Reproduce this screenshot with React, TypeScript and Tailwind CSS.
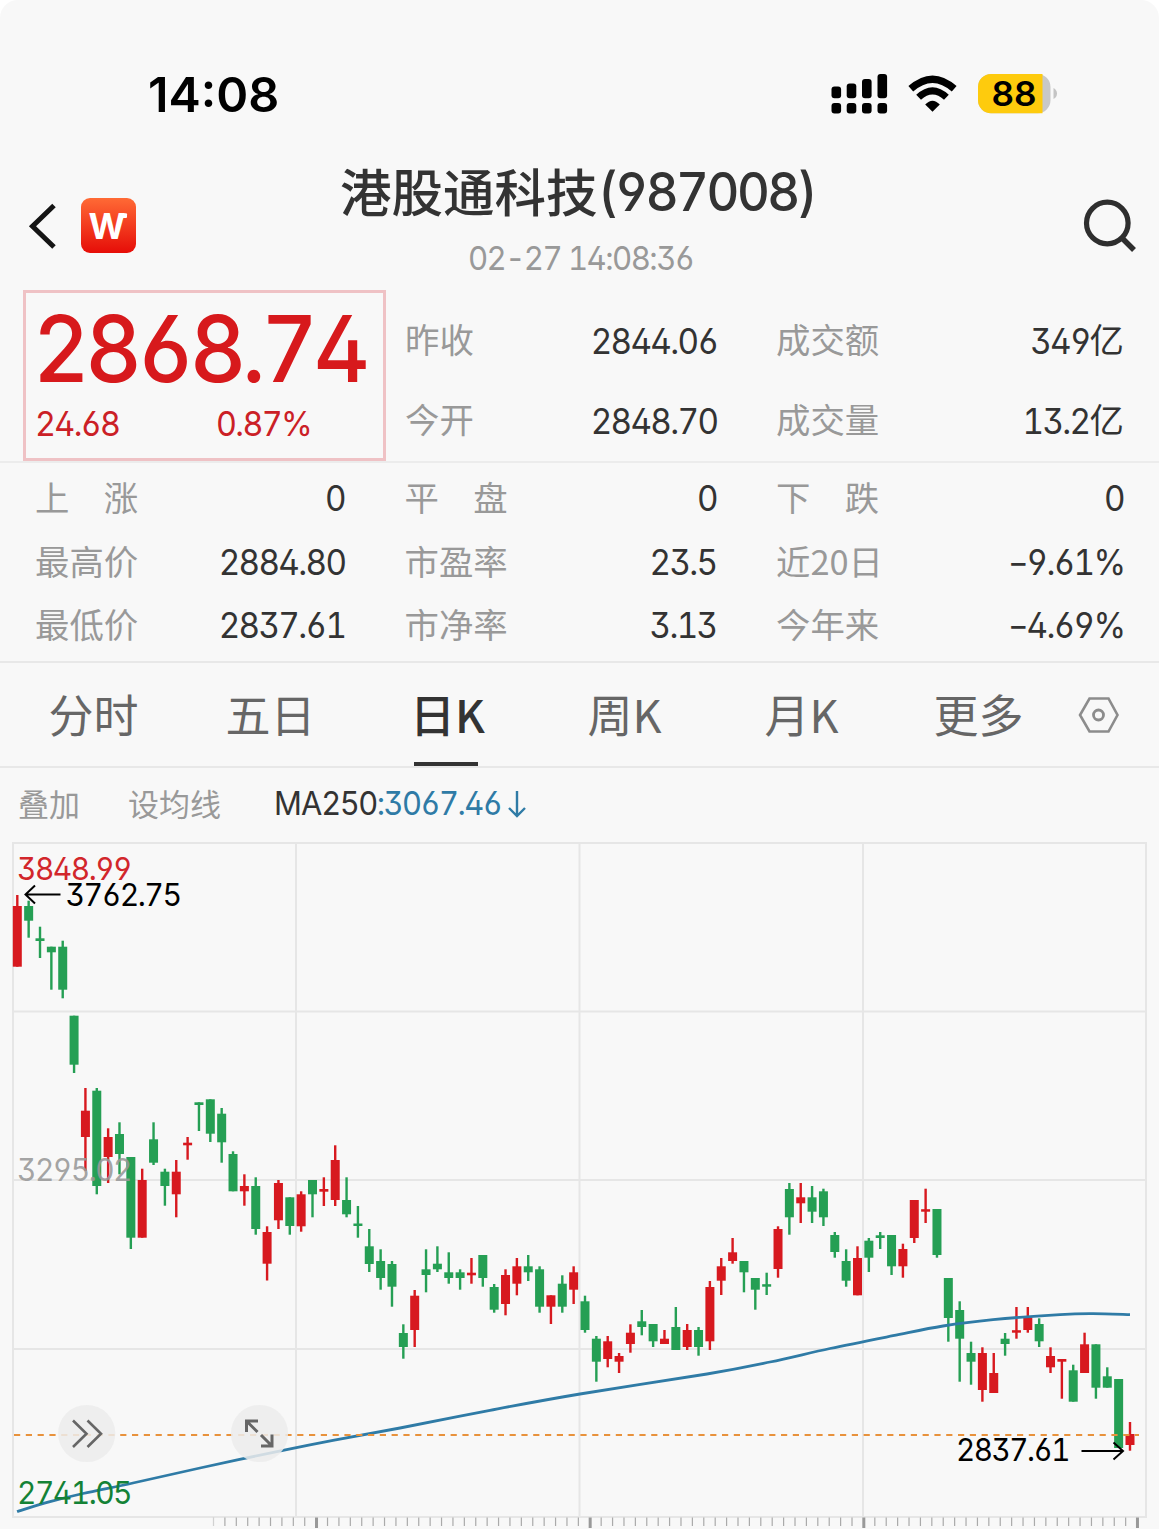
import React from "react";

const RED = "#d7191f";
const GREEN = "#259f54";

// [rising, high, body top, body bottom, low] in chart canvas units
const CANDLES: [number, number, number, number, number][] = [
  [1, 895, 906, 966.7, 966.7], [0, 900.7, 906, 920.7, 937.7], [0, 926.7, 938.3, 941, 958], [0, 946.7, 946.7, 952.3, 989.7],
  [0, 940.7, 946.7, 989.7, 998.3], [0, 1015.7, 1015.7, 1064.7, 1073], [1, 1088, 1110.7, 1137, 1171], [0, 1088, 1090.7, 1186, 1194.3],
  [1, 1128.3, 1137, 1157, 1183], [0, 1122.3, 1134, 1154, 1174.3], [0, 1157, 1157, 1237.7, 1249], [1, 1168.7, 1180, 1237.7, 1237.7],
  [0, 1122.3, 1139.3, 1162.7, 1165], [0, 1168.7, 1171.7, 1186, 1205.7], [1, 1160, 1171.7, 1194.3, 1217.3], [1, 1137, 1142.7, 1145.3, 1159.7],
  [0, 1102.3, 1102.3, 1105, 1131], [0, 1099.3, 1099.3, 1133.7, 1142], [0, 1108, 1113.7, 1142.3, 1162.7], [0, 1151.3, 1154, 1191.3, 1191.3],
  [1, 1174.3, 1186, 1191.3, 1205.7], [0, 1177.3, 1186, 1229, 1234.7], [1, 1226.3, 1232, 1263.7, 1280.5], [1, 1180, 1183, 1220.3, 1229],
  [0, 1197.3, 1197.3, 1226, 1234.7], [1, 1191.3, 1194.3, 1226.3, 1231.7], [0, 1180, 1180, 1194.3, 1217.3], [1, 1177.3, 1189, 1191.7, 1206],
  [1, 1145.3, 1160, 1200, 1206], [0, 1177.3, 1200, 1214.3, 1217.3], [0, 1206, 1223.5, 1226, 1237.7], [0, 1229, 1246.3, 1264, 1272],
  [0, 1249.3, 1261, 1278, 1289.7], [0, 1261, 1264, 1286.7, 1306.7], [0, 1324.3, 1333, 1347, 1358.7], [1, 1290, 1295.7, 1330, 1347],
  [0, 1249.3, 1269.3, 1275, 1292.3], [0, 1246.3, 1263.7, 1269.3, 1272], [0, 1252.3, 1272.3, 1278, 1283.7], [0, 1269.3, 1272.3, 1278, 1289.7],
  [1, 1258, 1272.7, 1275.3, 1283.7], [0, 1255, 1255, 1278, 1286.7], [0, 1284, 1287, 1309.7, 1312.7], [1, 1269.3, 1275, 1304, 1315.3],
  [1, 1258, 1266.3, 1283.7, 1295.3], [0, 1255, 1266.3, 1272.3, 1281], [0, 1266.3, 1269.3, 1306.7, 1312.7], [1, 1295.3, 1295.3, 1306.7, 1324],
  [0, 1275.3, 1283.7, 1306.7, 1312.7], [1, 1266.3, 1272.3, 1289.7, 1304], [0, 1295.7, 1301.3, 1330, 1332.7], [0, 1336, 1338.7, 1361.7, 1381.7],
  [1, 1336, 1341.3, 1359, 1367.3], [1, 1353, 1356, 1361.7, 1373], [1, 1324.3, 1332.7, 1344, 1352.7], [0, 1310, 1321.3, 1327, 1335.3],
  [0, 1324, 1324, 1341.3, 1347], [1, 1330, 1338.7, 1344, 1344], [0, 1307, 1327, 1350, 1350], [1, 1324, 1330, 1347, 1350],
  [0, 1327, 1330, 1347, 1355.7], [1, 1281, 1287, 1341.3, 1350], [1, 1258, 1266.3, 1280.7, 1295], [1, 1238, 1252.3, 1261, 1263.7],
  [0, 1261, 1261, 1272.3, 1292.3], [0, 1278, 1278, 1289.7, 1309.7], [0, 1272.7, 1284.2, 1286.7, 1295], [1, 1226.3, 1229, 1269, 1277.7],
  [0, 1183, 1189, 1217.3, 1234.7], [1, 1183, 1197.3, 1203.3, 1223], [0, 1186, 1197.3, 1211.7, 1223], [0, 1188.7, 1191.3, 1217.3, 1226],
  [0, 1232, 1235, 1252, 1257.7], [0, 1249.3, 1261, 1280.7, 1286.7], [1, 1246.3, 1258, 1295.3, 1295.3], [0, 1238, 1240.7, 1257.7, 1272],
  [0, 1232, 1235.3, 1238, 1249], [0, 1235, 1235, 1266.3, 1275], [1, 1243.7, 1249, 1266.3, 1277.7], [1, 1200, 1200, 1238, 1243],
  [1, 1188.7, 1209.2, 1211.7, 1223], [0, 1209, 1209, 1255, 1257.7], [0, 1278, 1278, 1318, 1341.7], [0, 1301.3, 1310, 1338.7, 1381.7],
  [0, 1341.7, 1353, 1361.7, 1384.7], [1, 1347.3, 1353, 1390, 1401.7], [1, 1353, 1373, 1393, 1393], [0, 1333, 1338.7, 1344, 1355.7],
  [1, 1307, 1330.2, 1332.7, 1338.7], [1, 1307, 1317.3, 1330, 1332.7], [0, 1318.3, 1324, 1341.3, 1347], [1, 1347.3, 1356, 1367.3, 1373],
  [1, 1359, 1359, 1361.7, 1398.7], [0, 1364.7, 1370.3, 1401.7, 1401.7], [1, 1332.7, 1344.3, 1373, 1373], [0, 1344.3, 1344.3, 1387.7, 1398.7],
  [0, 1367.3, 1376.3, 1387.7, 1387.7], [0, 1379, 1379, 1448, 1448], [1, 1422, 1434, 1445, 1450.7],
];

const MA_POINTS: [number, number][] = [
  [17, 1511.5], [50, 1501.7], [83, 1493.5], [133, 1483], [200, 1468], [283, 1450.3], [333, 1440.3], [400, 1428],
  [490, 1410.3], [580, 1394], [707, 1374], [770, 1362], [830, 1348.5], [893, 1335.7], [943, 1326],
  [993, 1319.7], [1060, 1314.6], [1093, 1313.7], [1130, 1314.7],
];

// Smooth curve through the moving-average points
function curve(p: [number, number][]) {
  let d = `M${p[0][0]} ${p[0][1]}`;
  for (let i = 0; i < p.length - 1; i++) {
    const a = p[Math.max(i - 1, 0)], b = p[i], c = p[i + 1], e = p[Math.min(i + 2, p.length - 1)];
    d += ` C${b[0] + (c[0] - a[0]) / 6} ${b[1] + (c[1] - a[1]) / 6} ${c[0] - (e[0] - b[0]) / 6} ${c[1] - (e[1] - b[1]) / 6} ${c[0]} ${c[1]}`;
  }
  return d;
}

const NUM = "inline-block whitespace-nowrap font-['Inter'] tracking-[-0.05em] scale-x-[0.95] [font-feature-settings:'tnum','ss01','cv02','cv03','cv04']";

function Stat({ label, value, unit }: { label: string; value: string; unit?: string }) {
  const negative = value.startsWith("-");
  return (
    <div className="flex items-center justify-between">
      <span className="pb-[5px] text-[34.4px] leading-none text-[#999]">{label}</span>
      <span className="flex items-center text-[#333]">
        <span className={`${NUM} origin-right text-[35px] leading-none`}>
          {negative && <span className="inline-block origin-right scale-x-[1.35] pr-[0px] pl-[0px] [font-feature-settings:'tnum'_0]">-</span>}
          {negative ? value.slice(1) : value}
        </span>
        {unit && <span className="pb-[5px] text-[34.4px] leading-none">{unit}</span>}
      </span>
    </div>
  );
}

function StatusBar() {
  return (
    <div className="flex h-[145px] items-start justify-between pt-[70px] pr-[102px] pl-[148px]">
      <span className="inline-block origin-left font-['Inter'] text-[48.500px] leading-[50px] font-semibold text-black">14:08</span>
      <svg width="230" height="48" viewBox="828 70 230 48">
        <g fill="#000">
          <rect x="831.5" y="86.5" width="9.6" height="11.7" rx="3" />
          <rect x="846.7" y="83.5" width="9.6" height="14.7" rx="3" />
          <rect x="862" y="79" width="9.6" height="19.2" rx="3" />
          <rect x="877.5" y="74" width="9.6" height="24.2" rx="3" />
          <rect x="831.5" y="103" width="9.6" height="10.6" rx="3" />
          <rect x="846.7" y="103" width="9.6" height="10.6" rx="3" />
          <rect x="862" y="103" width="9.6" height="10.6" rx="3" />
          <rect x="877.5" y="103" width="9.6" height="10.6" rx="3" />
          <path d="M932.5 111.8 L925.2 104.6 Q932.5 97 939.8 104.6Z" />
        </g>
        <path d="M910.800 88.800 Q932.500 69.500 954.200 88.800" fill="none" stroke="#000" strokeWidth="7.200" />
        <path d="M918.600 97.300 Q932.500 84.300 946.400 97.300" fill="none" stroke="#000" strokeWidth="7" />
        <path d="M991 74 H1037.500 A13 13 0 0 1 1050.500 87 V100.300 A13 13 0 0 1 1037.500 113.300 H991 A13 13 0 0 1 978 100.300 V87 A13 13 0 0 1 991 74Z" fill="#c8c8c8" />
        <path d="M991 74 H1042.500 V113.300 H991 A13 13 0 0 1 978 100.300 V87 A13 13 0 0 1 991 74Z" fill="#fecb0d" />
        <path d="M1053.500 88 Q1057 90 1057 93.500 T1053.500 99Z" fill="#c4c4c4" />
        <text x="991.500" y="106" fontFamily="Inter" fontWeight="600" fontSize="34" textLength="45" lengthAdjust="spacingAndGlyphs">88</text>
      </svg>
    </div>
  );
}

function Header() {
  return (
    <div className="flex h-[145px] justify-between pr-[22px] pl-[28px]">
      <div className="flex w-[200px] items-start gap-[24px] pt-[53px]">
        <svg className="mt-[4px]" width="29" height="48" viewBox="28 202 29 48">
          <path d="M54 205.500 L32.500 226.200 L54 247" fill="none" stroke="#151515" strokeWidth="5" />
        </svg>
        <svg width="55" height="55" viewBox="0 0 55 55">
          <defs>
            <linearGradient id="brand" x1="0" y1="0" x2="0" y2="1">
              <stop offset="0" stopColor="#ff6a35" />
              <stop offset="1" stopColor="#e60d08" />
            </linearGradient>
          </defs>
          <rect width="55" height="55" rx="9" fill="url(#brand)" />
          <text x="7.500" y="40.700" fill="#fff" fontFamily="Inter" fontWeight="700" fontSize="35" textLength="37" lengthAdjust="spacingAndGlyphs">W</text>
          <rect x="38.500" y="15.300" width="7.500" height="4.800" rx="1" fill="#fff" />
        </svg>
      </div>
      <div className="flex flex-col items-center pt-[17px]">
        <div className="flex h-[56px] w-[482px] items-center text-[51.500px] leading-none font-medium text-[#333]">
          <span className="whitespace-nowrap">港股通科技</span>
          <span className={`${NUM} origin-left pt-[4px] text-[53.500px]`}>(987008)</span>
        </div>
        <span className={`${NUM} mt-[23px] text-[32.800px] leading-[34px] text-[#999]`}>02-27 14:08:36</span>
      </div>
      <div className="flex w-[204px] justify-end pt-[54px]">
        <svg width="56" height="56" viewBox="1082 199 56 56">
          <circle cx="1107.300" cy="223" r="20.800" fill="none" stroke="#2e2e2e" strokeWidth="5.200" />
          <path d="M1121.500 237.500 L1134 250" stroke="#2e2e2e" strokeWidth="5.500" />
        </svg>
      </div>
    </div>
  );
}

function Quote() {
  return (
    <div className="flex h-[173px] border-b-2 border-[#ececec] pl-[23px]">
      <div className="h-[171px] w-[363px] border-[3px] border-[#efc2c5] pl-[7px]">
        <div className={`${NUM} mt-[8px] origin-left text-[92px] leading-[96px] font-medium text-[#d7191c]`}>2868.74</div>
        <div className="mt-[5px] flex pl-[2px] text-[34px] leading-[44px] text-[#cb2026]">
          <span className={`${NUM} w-[181px] origin-left`}>24.68</span>
          <span className={`${NUM} origin-left`}>0.87%</span>
        </div>
      </div>
      <div className="grid flex-1 grid-cols-[312px_348px] grid-rows-[80px_80px] gap-x-[59px] pt-[11px] pl-[19px]">
        <Stat label="昨收" value="2844.06" />
        <Stat label="成交额" value="349" unit="亿" />
        <Stat label="今开" value="2848.70" />
        <Stat label="成交量" value="13.2" unit="亿" />
      </div>
    </div>
  );
}

function Stats() {
  return (
    <div className="grid h-[200px] grid-cols-[310px_312px_348px] grid-rows-[63.500px_63.500px_63.500px] gap-x-[59.500px] border-b-2 border-[#e8e8e8] pt-[4px] pl-[35px]">
      <Stat label="上　涨" value="0" />
      <Stat label="平　盘" value="0" />
      <Stat label="下　跌" value="0" />
      <Stat label="最高价" value="2884.80" />
      <Stat label="市盈率" value="23.5" />
      <Stat label="近20日" value="-9.61%" />
      <Stat label="最低价" value="2837.61" />
      <Stat label="市净率" value="3.13" />
      <Stat label="今年来" value="-4.69%" />
    </div>
  );
}

function Tabs() {
  return (
    <div className="flex h-[105px] items-stretch border-b-2 border-[#e8e8e8] pl-[5px]">
      {["分时", "五日", "日K", "周K", "月K", "更多"].map((t) => (
        <div key={t} className={`relative flex w-[177px] justify-center pt-[28px] text-[45px] leading-[45px] ${t === "日K" ? "font-medium text-[#333]" : "text-[#666]"}`}>
          {t}
          {t === "日K" && <span className="absolute bottom-0 left-[55px] h-[4px] w-[64px] bg-[#333]" />}
        </div>
      ))}
      <svg className="mt-[30px] ml-[10px]" width="44" height="44" viewBox="0 0 44 44" fill="none" stroke="#8c8c8c">
        <path d="M12.500 5.500 H31.500 L40.500 22 L31.500 38.500 H12.500 L3 22Z" strokeWidth="2.600" />
        <circle cx="21.500" cy="22" r="5" strokeWidth="2.800" />
      </svg>
    </div>
  );
}

function Averages() {
  return (
    <div className="flex h-[74px] items-center pl-[18px] text-[31px] leading-none text-[#999]">
      <span className="w-[110px] pb-[6px]">叠加</span>
      <span className="w-[146px] pb-[6px]">设均线</span>
      <span className={`${NUM} w-[233px] origin-left pb-[1px] text-[32.500px] text-[#333]`}>
        <span className="tracking-[-0.03em]">MA</span>250<span className="text-[#2f7ba6]">:3067.46</span>
      </span>
      <svg className="mb-[3px]" width="20" height="30" viewBox="0 0 20 30" fill="none" stroke="#2f7ba6" strokeWidth="2.400">
        <path d="M10 2 V27 M2 19 L10 27 L18 19" />
      </svg>
    </div>
  );
}

function ChartText({ x, y, w, fill, children }: { x: number; y: number; w: number; fill: string; children: string }) {
  return (
    <text x={x} y={y} fill={fill} fontSize="31.500" textLength={w} lengthAdjust="spacingAndGlyphs" className="font-['Inter'] tracking-[-0.05em] [font-feature-settings:'tnum','ss01','cv02','cv03','cv04']">
      {children}
    </text>
  );
}

function Chart() {
  const ticks = Array.from({ length: 82 }, (_, i) => 212.900 + i * 11.402);
  return (
    <svg className="block" width="1160" height="687" viewBox="0 842 1160 687">
      <g stroke="#e6e6e6" strokeWidth="2" fill="none">
        <rect x="13" y="843" width="1133" height="674" />
        <path d="M296 843 V1517 M579.500 843 V1517 M863 843 V1517 M13 1011.500 H1146 M13 1180 H1146 M13 1349 H1146" />
      </g>
      {ticks.map((x, i) => {
        const major = i % 24 === 9;
        return <rect key={i} x={major ? x - 0.500 : x} y="1517.500" width={major ? 3 : 1.200} height={major ? 10.500 : 8.500} fill={major ? "#999" : "#aaa"} opacity={i === 0 ? 0.5 : 1} />;
      })}
      {CANDLES.map(([up, high, top, bottom, low], i) => {
        const x = 17.300 + i * 11.354;
        return (
          <g key={i} fill={up ? RED : GREEN}>
            <rect x={x - 1.200} y={high} width="2.400" height={low - high} />
            <rect x={x - 4.500} y={top} width="9" height={bottom - top} />
          </g>
        );
      })}
      <path d={curve(MA_POINTS)} fill="none" stroke="#2f7ba6" strokeWidth="2.800" />
      <path d="M14 1435 H1139" stroke="#e8923c" strokeWidth="2" strokeDasharray="6.200 5.600" />
      <g fill="#ececec" fillOpacity="0.850">
        <circle cx="86.700" cy="1433.500" r="28.600" />
        <circle cx="259.500" cy="1433.500" r="28.600" />
      </g>
      <g fill="none" stroke="#666" strokeWidth="2.600">
        <path d="M73 1420.500 L86.500 1433.800 L73 1447 M87.500 1420.500 L101 1433.800 L87.500 1447" />
        <path d="M258 1421 H246.500 V1432 M246.500 1421 L257.500 1432 M261 1446 H272 V1434.500 M261 1435 L272 1446" strokeWidth="3" />
      </g>
      <ChartText x={17} y={880} w={114} fill="#d2262b">3848.99</ChartText>
      <ChartText x={65.500} y={906} w={115} fill="#000">3762.75</ChartText>
      <ChartText x={17} y={1180.700} w={114} fill="#999999e0">3295.02</ChartText>
      <ChartText x={17} y={1503.700} w={114} fill="#148236">2741.05</ChartText>
      <ChartText x={956} y={1460.500} w={113} fill="#000">2837.61</ChartText>
      <g fill="none" stroke="#000" strokeWidth="2">
        <path d="M60.500 894.500 H25.500 M35 885.500 L25.500 894.500 L35 903.500" />
        <path d="M1081.500 1451 H1123 M1113.500 1442.500 L1123 1451 L1113.500 1459.500" />
      </g>
    </svg>
  );
}

export default function App() {
  return (
    <div className="h-[1529px] w-[1160px] overflow-hidden bg-white">
      <div className="h-[1529px] w-[1159px] overflow-hidden rounded-t-[18px] bg-[#f8f8f8] font-['Noto_Sans_CJK_SC',sans-serif]">
        <div className="w-[1160px]">
          <StatusBar />
          <Header />
          <Quote />
          <Stats />
          <Tabs />
          <Averages />
          <Chart />
        </div>
      </div>
    </div>
  );
}
